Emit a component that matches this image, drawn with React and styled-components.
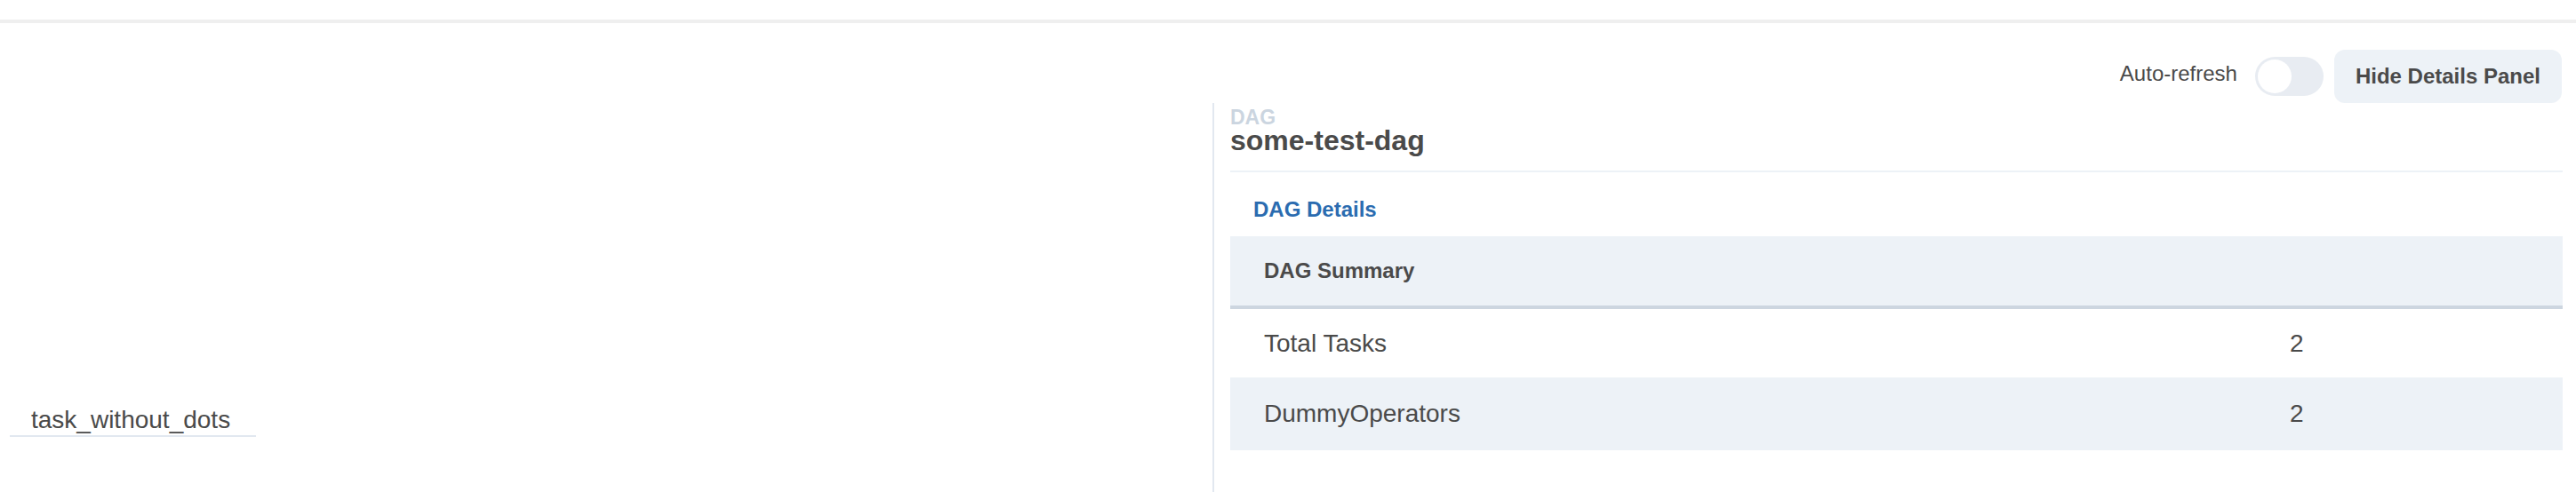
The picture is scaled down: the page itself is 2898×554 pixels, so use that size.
import React from "react";
import styled, { createGlobalStyle } from "styled-components";

const GlobalStyle = createGlobalStyle`
  html, body {
    margin: 0;
    padding: 0;
    background: #ffffff;
  }
  body {
    font-family: "Liberation Sans", Arial, Helvetica, sans-serif;
    color: #4a4a4a;
  }
  * { box-sizing: border-box; }
`;

const Page = styled.div`
  width: 2898px;
  height: 554px;
  overflow: hidden;
  display: flex;
  flex-direction: column;
  background: #ffffff;
`;

const TopBar = styled.div`
  height: 26px;
  flex-shrink: 0;
  border-bottom: 4px solid #efefef;
`;

const Toolbar = styled.div`
  display: flex;
  justify-content: flex-end;
  align-items: center;
  padding: 30px 16px 0 0;
  flex-shrink: 0;
`;

const SwitchLabel = styled.label`
  font-size: 24px;
  line-height: 28px;
  margin-right: 20px;
  padding-bottom: 6px;
  color: #4a4a4a;
`;

const SwitchTrack = styled.span`
  display: inline-flex;
  align-items: center;
  width: 77px;
  height: 44px;
  padding: 3px;
  border-radius: 22px;
  background: #e8ecf2;
  margin-right: 12px;
  justify-content: ${(p) => (p.$on ? "flex-end" : "flex-start")};
`;

const SwitchThumb = styled.span`
  width: 38px;
  height: 38px;
  border-radius: 50%;
  background: #ffffff;
`;

const Button = styled.button`
  height: 60px;
  padding: 0 24px;
  border: none;
  border-radius: 12px;
  background: #edf2f7;
  color: #4a4a4a;
  font-family: inherit;
  font-size: 24px;
  font-weight: 700;
  cursor: pointer;
`;

const Main = styled.div`
  flex: 1;
  display: flex;
  min-height: 0;
`;

const LeftPanel = styled.div`
  width: 1364px;
  flex-shrink: 0;
  display: flex;
  flex-direction: column;
  padding-left: 11px;
`;

const GridHeader = styled.div`
  height: 340px;
`;

const TaskRow = styled.div`
  width: 277px;
  padding-left: 24px;
  font-size: 28px;
  line-height: 34px;
  border-bottom: 2px solid #e2e8f0;
  color: #4a4a4a;
`;

const RightPanel = styled.div`
  flex: 1;
  border-left: 2px solid #e2e8f0;
  padding: 4px 15px 0 18px;
  display: flex;
  flex-direction: column;
`;

const DetailsHeader = styled.div`
  padding-bottom: 20px;
  border-bottom: 2px solid #edf2f7;
`;

const Kicker = styled.div`
  font-size: 23px;
  line-height: 24px;
  font-weight: 700;
  color: #cbd5e0;
`;

const Title = styled.div`
  font-size: 32px;
  line-height: 28px;
  font-weight: 700;
  color: #4a4a4a;
`;

const Tabs = styled.div`
  display: flex;
`;

const Tab = styled.div`
  padding: 28px 26px 16px;
  font-size: 24px;
  line-height: 28px;
  font-weight: 700;
  color: ${(p) => (p.$active ? "#2b6cb0" : "#4a4a4a")};
`;

const SummaryTable = styled.div`
  display: flex;
  flex-direction: column;
`;

const Row = styled.div`
  display: grid;
  grid-template-columns: 1154px 1fr;
  align-items: center;
  height: ${(p) => p.$h}px;
  background: ${(p) => (p.$shaded ? "#edf2f7" : "transparent")};
  border-bottom: ${(p) => (p.$head ? "4px solid #cdd6e0" : "none")};
`;

const HeadCell = styled.div`
  padding-left: 38px;
  font-size: 24px;
  font-weight: 700;
  color: #4a4a4a;
`;

const Cell = styled.div`
  padding-left: 38px;
  font-size: 28px;
  color: #4a4a4a;
`;

const rows = [
  { label: "Total Tasks", value: 2 },
  { label: "DummyOperators", value: 2 },
];

export default function App() {
  return (
    <>
      <GlobalStyle />
      <Page>
        <TopBar />
        <Toolbar>
          <SwitchLabel>Auto-refresh</SwitchLabel>
          <SwitchTrack role="switch" aria-checked="false">
            <SwitchThumb />
          </SwitchTrack>
          <Button>Hide Details Panel</Button>
        </Toolbar>
        <Main>
          <LeftPanel>
            <GridHeader />
            <TaskRow>task_without_dots</TaskRow>
          </LeftPanel>
          <RightPanel>
            <DetailsHeader>
              <Kicker>DAG</Kicker>
              <Title>some-test-dag</Title>
            </DetailsHeader>
            <Tabs>
              <Tab $active>DAG Details</Tab>
            </Tabs>
            <SummaryTable>
              <Row $head $shaded $h={82}>
                <HeadCell>DAG Summary</HeadCell>
                <div />
              </Row>
              {rows.map((r, i) => (
                <Row key={r.label} $shaded={i % 2 === 1} $h={i === 0 ? 77 : 82}>
                  <Cell>{r.label}</Cell>
                  <Cell>{r.value}</Cell>
                </Row>
              ))}
            </SummaryTable>
          </RightPanel>
        </Main>
      </Page>
    </>
  );
}
